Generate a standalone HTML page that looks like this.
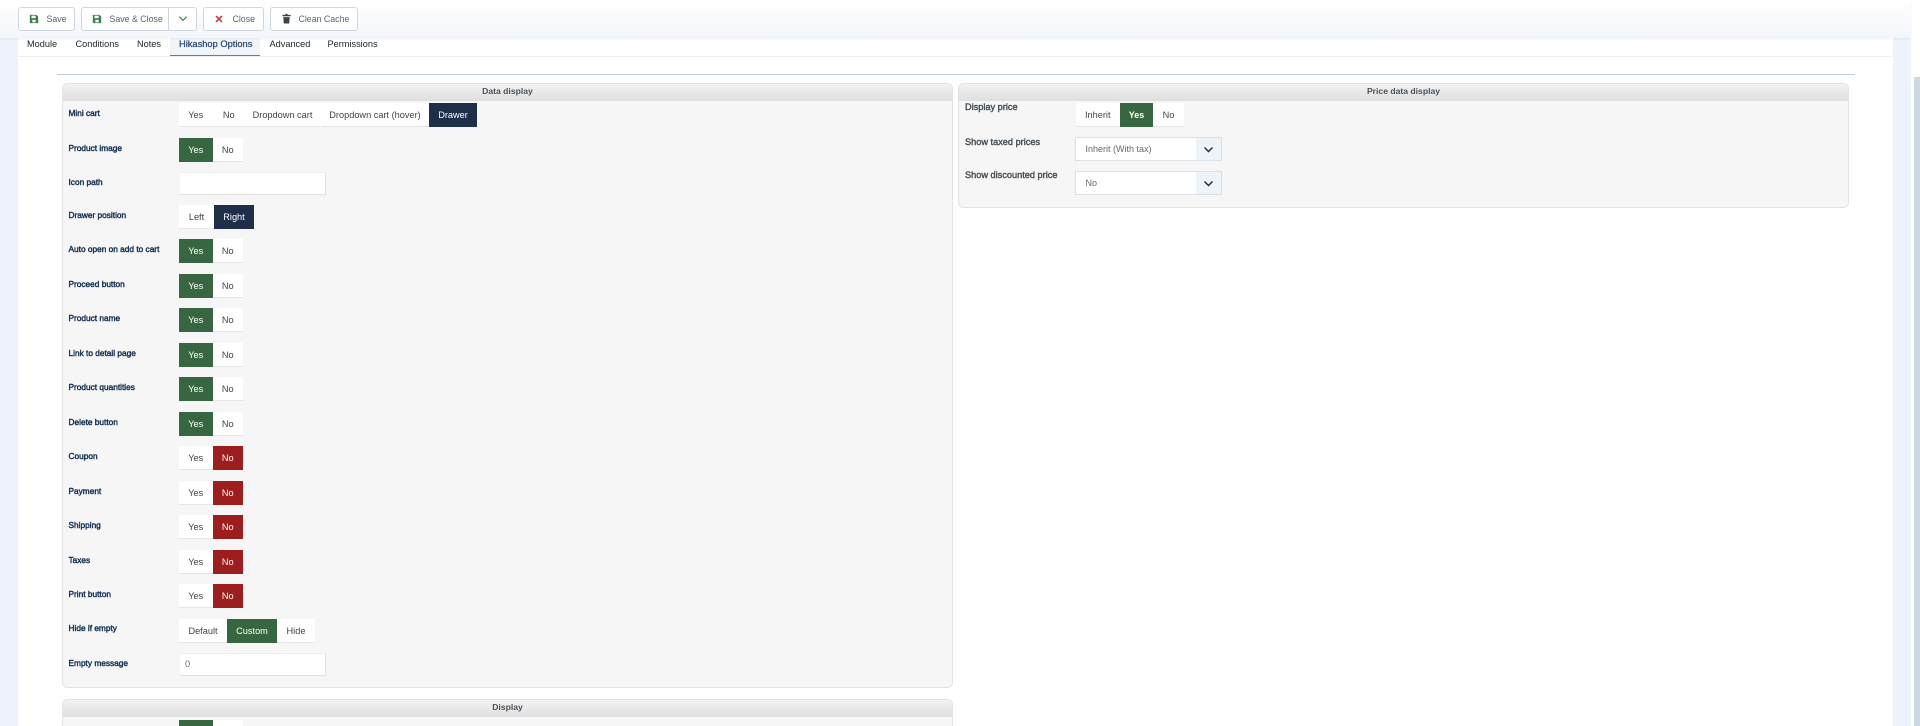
<!DOCTYPE html>
<html lang="en"><head><meta charset="utf-8"><title>Hikashop Options</title>
<style>
*{box-sizing:border-box}
html,body{margin:0;padding:0;width:1920px;height:726px;overflow:hidden;background:#fff}
#w{position:absolute;left:0;top:0;width:1920px;height:726px;overflow:hidden;background:#fff;font-family:"Liberation Sans",sans-serif;font-size:9.2px;color:#2b3036}
.a,.b,.l,.i,.s,.t,.tb,.p,.h{position:absolute}
.bgl{position:absolute;left:0;top:38px;width:18px;height:688px;background:#eef3fb}
.bgr{position:absolute;left:1893px;top:38px;width:18px;height:688px;background:#eef3fb}
.sb{position:absolute;left:1914px;top:77px;width:6px;height:649px;background:#cfd9e4}
.top{position:absolute;left:0;top:0;width:1911px;height:38px;background:linear-gradient(#fff,#f3f6fb);box-shadow:0 1px 2px rgba(0,0,0,.06)}
.tb{top:7px;height:24px;background:#fff;border:1px solid #ced6e0;border-radius:3px;color:#5b636b;font-size:8.8px;line-height:22px;white-space:nowrap}
.tb span{position:absolute;top:0}
.tb svg{position:absolute;top:6px}
.t{top:38px;height:18px;line-height:11px;padding-top:1px;color:#22262a;font-size:9.2px;white-space:nowrap}
.p{background:#f6f6f6;border:1px solid #e3e3e3;border-radius:5px;overflow:hidden}
.h{left:0;right:0;top:0;height:16.5px;background:linear-gradient(#f2f2f2,#dfdfdf);text-align:center;font-weight:bold;font-size:8.6px;line-height:15px;color:#49525a}
.l{left:68.5px;font-size:8.3px;-webkit-text-stroke:.42px #132f53;line-height:12px;color:#132f53;white-space:nowrap}
.r{color:#49525a;-webkit-text-stroke:.42px #49525a;font-size:9.2px;left:965px}
.b{height:24px;line-height:24px;text-align:center;background:#fff;color:#3d444b;font-size:9.2px;white-space:nowrap;border-bottom:1px solid #e6e6e6}
.g{background:#386641;color:#fff;border-bottom-color:#386641}
.d{background:#9c1e1e;color:#fff;border-bottom-color:#9c1e1e}
.n{background:#1f2f4a;color:#fff;border-bottom-color:#1f2f4a}
.i{left:178.5px;width:147px;height:22.5px;background:#fff;border:1px solid #e1e1e1;border-left-color:#f6f6f6;border-top-color:#eeeeee;line-height:21px;padding-left:5.5px;font-size:9.2px;color:#626a72}
.s{left:1075px;width:147px;height:24px;background:#fff;border:1px solid #dbe0e6;line-height:23px;padding-left:9.5px;font-size:9px;color:#626a72}
.s i{position:absolute;right:0;top:0;bottom:0;width:25px;background:#eef3fa}
.s svg{position:absolute;right:7px;top:8px}
</style></head><body><div id="w">
<div class="bgl"></div><div class="bgr"></div><div class="sb"></div>

<div class="t" style="left:27px">Module</div>
<div class="t" style="left:75.5px">Conditions</div>
<div class="t" style="left:137px">Notes</div>
<div class="a" style="left:170px;top:38px;width:90px;height:19px;background:#f1f5fa;border-bottom:2px solid #64799b"></div>
<div class="t" style="left:179px;color:#2d4a73;font-size:9.3px;-webkit-text-stroke:.25px #2d4a73">Hikashop Options</div>
<div class="t" style="left:269.5px">Advanced</div>
<div class="t" style="left:327.5px">Permissions</div>
<div class="a" style="left:18px;top:56px;width:1875px;height:1px;background:#eef0f3"></div>
<div class="a" style="left:57px;top:74px;width:1798px;height:1px;background:#bccadb"></div>

<div class="top"></div>
<div class="tb" style="left:18px;width:57px"><svg style="left:10px" width="10" height="10" viewBox="0 0 12 12"><path fill="#3f7d4e" d="M1 1h8l2 2v8H1z"/><rect x="3" y="2" width="5" height="3" fill="#fff"/><rect x="4" y="7" width="4" height="3" fill="#fff"/></svg><span style="left:27.5px">Save</span></div>
<div class="tb" style="left:81px;width:116px"><svg style="left:10px" width="10" height="10" viewBox="0 0 12 12"><path fill="#3f7d4e" d="M1 1h8l2 2v8H1z"/><rect x="3" y="2" width="5" height="3" fill="#fff"/><rect x="4" y="7" width="4" height="3" fill="#fff"/></svg><span style="left:27.5px">Save &amp; Close</span><i class="a" style="left:86px;top:0;width:1px;height:22px;background:#ced6e0"></i><svg style="left:96px;top:7px" width="10" height="8" viewBox="0 0 11 8"><path d="M1.500 1.500 5.500 5.500 9.500 1.500" fill="none" stroke="#3f7d4e" stroke-width="1.3"/></svg></div>
<div class="tb" style="left:203px;width:61px"><svg style="left:10px;top:6px" width="10" height="10" viewBox="0 0 10 10"><path d="M2 2 8 8M8 2 2 8" stroke="#c8322f" stroke-width="1.5"/></svg><span style="left:28.5px">Close</span></div>
<div class="tb" style="left:270px;width:88px"><svg style="left:10px;top:5px" width="11" height="11" viewBox="0 0 12 12"><path fill="#3a424a" d="M1.500 2h3l.5-1h2l.5 1h3v1.500h-9zM2.500 4.500h7L9 11.500H3z"/></svg><span style="left:27.5px">Clean Cache</span></div>

<div class="p" style="left:62px;top:83px;width:891px;height:605px"><div class="h">Data display</div></div>
<div class="p" style="left:958px;top:83px;width:891px;height:125px"><div class="h">Price data display</div></div>
<div class="p" style="left:62px;top:699px;width:891px;height:60px"><div class="h">Display</div></div>

<div class="l" style="top:107px">Mini cart</div>
<div class="b" style="left:179px;top:103px;width:33.5px">Yes</div><div class="b" style="left:212.5px;top:103px;width:32.5px">No</div><div class="b" style="left:245px;top:103px;width:75px">Dropdown cart</div><div class="b" style="left:321px;top:103px;width:108px">Dropdown cart (hover)</div><div class="a" style="left:320px;top:103px;width:1px;height:24px;background:#fff"></div><div class="b n" style="left:429px;top:103px;width:48px">Drawer</div>

<div class="l" style="top:142px">Product image</div>
<div class="b g" style="left:179px;top:138px;width:33.5px">Yes</div><div class="b" style="left:212.5px;top:138px;width:30.5px">No</div>

<div class="l" style="top:176px">Icon path</div>
<div class="i" style="top:172px"></div>

<div class="l" style="top:208.500px">Drawer position</div>
<div class="b" style="left:179px;top:205px;width:35px">Left</div><div class="b n" style="left:214px;top:205px;width:40px">Right</div>

<div class="l" style="top:243px">Auto open on add to cart</div>
<div class="b g" style="left:179px;top:239px;width:33.5px">Yes</div><div class="b" style="left:212.5px;top:239px;width:30.5px">No</div>
<div class="l" style="top:277.500px">Proceed button</div>
<div class="b g" style="left:179px;top:274px;width:33.5px">Yes</div><div class="b" style="left:212.5px;top:274px;width:30.5px">No</div>
<div class="l" style="top:312px">Product name</div>
<div class="b g" style="left:179px;top:308px;width:33.5px">Yes</div><div class="b" style="left:212.5px;top:308px;width:30.5px">No</div>
<div class="l" style="top:346.500px">Link to detail page</div>
<div class="b g" style="left:179px;top:343px;width:33.5px">Yes</div><div class="b" style="left:212.5px;top:343px;width:30.5px">No</div>
<div class="l" style="top:381px">Product quantities</div>
<div class="b g" style="left:179px;top:377px;width:33.5px">Yes</div><div class="b" style="left:212.5px;top:377px;width:30.5px">No</div>
<div class="l" style="top:415.500px">Delete button</div>
<div class="b g" style="left:179px;top:412px;width:33.5px">Yes</div><div class="b" style="left:212.5px;top:412px;width:30.5px">No</div>
<div class="l" style="top:450px">Coupon</div>
<div class="b" style="left:179px;top:446px;width:33.5px">Yes</div><div class="b d" style="left:212.5px;top:446px;width:30.5px">No</div>
<div class="l" style="top:484.500px">Payment</div>
<div class="b" style="left:179px;top:481px;width:33.5px">Yes</div><div class="b d" style="left:212.5px;top:481px;width:30.5px">No</div>
<div class="l" style="top:519px">Shipping</div>
<div class="b" style="left:179px;top:515px;width:33.5px">Yes</div><div class="b d" style="left:212.5px;top:515px;width:30.5px">No</div>
<div class="l" style="top:553.500px">Taxes</div>
<div class="b" style="left:179px;top:550px;width:33.5px">Yes</div><div class="b d" style="left:212.5px;top:550px;width:30.5px">No</div>
<div class="l" style="top:588px">Print button</div>
<div class="b" style="left:179px;top:584px;width:33.5px">Yes</div><div class="b d" style="left:212.5px;top:584px;width:30.5px">No</div>

<div class="l" style="top:622px">Hide if empty</div>
<div class="b" style="left:179px;top:619px;width:48px">Default</div><div class="b g" style="left:227px;top:619px;width:50px">Custom</div><div class="b" style="left:277px;top:619px;width:38px">Hide</div>

<div class="l" style="top:657px">Empty message</div>
<div class="i" style="top:653px">0</div>

<div class="b g" style="left:179px;top:720px;width:33.5px"></div><div class="b" style="left:212.5px;top:720px;width:30.5px"></div>

<div class="l r" style="top:101px">Display price</div>
<div class="b" style="left:1075.5px;top:103px;width:44.5px">Inherit</div><div class="b g" style="left:1120px;top:103px;width:33px;font-weight:bold;font-size:9px">Yes</div><div class="b" style="left:1153px;top:103px;width:31px">No</div>
<div class="l r" style="top:136px">Show taxed prices</div>
<div class="s" style="top:137px">Inherit (With tax)<i></i><svg width="11" height="8" viewBox="0 0 11 8"><path d="M1.500 1.500 5.500 5.500 9.500 1.500" fill="none" stroke="#22262a" stroke-width="1.4"/></svg></div>
<div class="l r" style="top:169px">Show discounted price</div>
<div class="s" style="top:171px">No<i></i><svg width="11" height="8" viewBox="0 0 11 8"><path d="M1.500 1.500 5.500 5.500 9.500 1.500" fill="none" stroke="#22262a" stroke-width="1.4"/></svg></div>
</div></body></html>
